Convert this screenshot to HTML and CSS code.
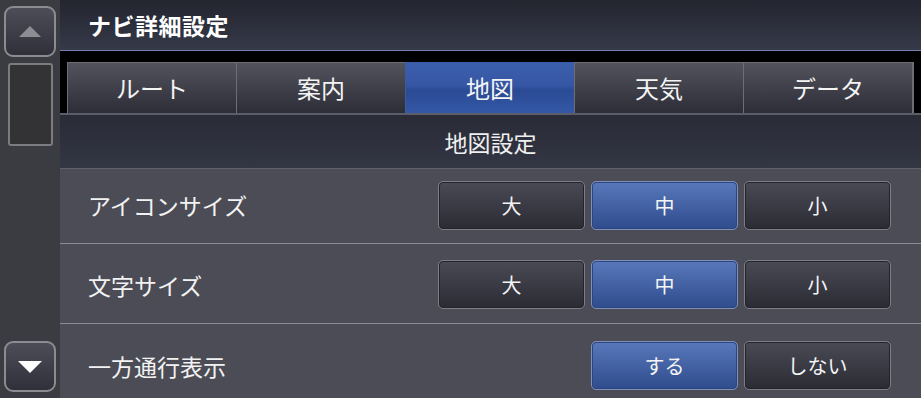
FILE: index.html
```html
<!DOCTYPE html>
<html lang="ja">
<head>
<meta charset="utf-8">
<link rel="stylesheet" href="styles.css">
</head>
<body>
<div class="app">
  <div class="sidebar">
    <div class="scroll-btn up"><span class="tri-up"></span></div>
    <div class="thumb"></div>
    <div class="spacer"></div>
    <div class="scroll-btn down"><span class="tri-down"></span></div>
  </div>
  <div class="main">
    <div class="header">ナビ詳細設定</div>
    <div class="tabbar">
      <div class="tab">ルート</div>
      <div class="tab">案内</div>
      <div class="tab active">地図</div>
      <div class="tab">天気</div>
      <div class="tab">データ</div>
    </div>
    <div class="section">地図設定</div>
    <div class="row r1">
      <div class="label">アイコンサイズ</div>
      <div class="opts">
        <div class="btn">大</div>
        <div class="btn on">中</div>
        <div class="btn">小</div>
      </div>
    </div>
    <div class="row r2">
      <div class="label">文字サイズ</div>
      <div class="opts">
        <div class="btn">大</div>
        <div class="btn on">中</div>
        <div class="btn">小</div>
      </div>
    </div>
    <div class="row r3">
      <div class="label">一方通行表示</div>
      <div class="opts">
        <div class="btn on">する</div>
        <div class="btn">しない</div>
      </div>
    </div>
  </div>
</div>
</body>
</html>
```
FILE: styles.css
```css
* { box-sizing: border-box; }
html, body { margin: 0; padding: 0; }
body {
  width: 921px;
  height: 398px;
  overflow: hidden;
  background: #4b4c56;
  font-family: "Noto Sans CJK JP", "Noto Sans", sans-serif;
  color: #f2f2f2;
}
.app { display: flex; width: 921px; height: 398px; }

.sidebar {
  width: 60px;
  flex: none;
  background: #3b3b42;
  display: flex;
  flex-direction: column;
  align-items: center;
  padding: 6px 0 6px 0;
}
.scroll-btn {
  width: 52px;
  height: 51px;
  border: 2px solid #8b8b92;
  border-radius: 9px;
  background: linear-gradient(#4c4d57, #2f3039);
  display: flex;
  align-items: center;
  justify-content: center;
  margin-left: -1px;
}
.tri-up {
  width: 0; height: 0;
  border-left: 11px solid transparent;
  border-right: 11px solid transparent;
  border-bottom: 11px solid #8d8d93;
}
.tri-down {
  width: 0; height: 0;
  border-left: 12px solid transparent;
  border-right: 12px solid transparent;
  border-top: 12px solid #ffffff;
}
.thumb {
  margin-top: 6px;
  width: 45px;
  height: 83px;
  background: #333336;
  border: 2px solid #7c7c80;
  border-radius: 3px;
}
.spacer { flex: 1; }

.main { flex: 1; display: flex; flex-direction: column; min-width: 0; }

.header {
  height: 50px;
  flex: none;
  padding-left: 28px;
  display: flex;
  align-items: center;
  font-size: 23px;
  font-weight: bold;
  letter-spacing: 0.5px;
  background: linear-gradient(#23252f, #363948);
  color: #ffffff;
}
.tabbar {
  flex: none;
  height: 63px;
  background: #000;
  border-top: 1px solid #7580aa;
  padding: 11px 7px 0 7px;
  display: flex;
}
.tab {
  flex: 1;
  height: 51px;
  border: 1px solid #6c6d75;
  border-bottom: none;
  border-right-width: 0;
  background: linear-gradient(#52535d, #2c2d37);
  display: flex;
  align-items: center;
  justify-content: center;
  font-size: 24px;
  color: #f4f4f4;
  padding-bottom: 2px;
}
.tab:last-child { border-right-width: 2px; }
.tab.active {
  background: linear-gradient(#3b5fac, #3656a4 45%, #2a4a94 55%, #3558a6);
  border-color: #3a5ca8;
}
.section {
  flex: none;
  height: 56px;
  border-top: 2px solid #5b5d68;
  border-bottom: 1px solid #5e606c;
  background: linear-gradient(#292b37, #333643);
  display: flex;
  align-items: center;
  justify-content: center;
  font-size: 23px;
  color: #f0f0f0;
}
.row {
  flex: none;
  display: flex;
  align-items: center;
  justify-content: space-between;
  padding: 0 30px 0 28px;
  background: #4b4c56;
  border-bottom: 1px solid #8b8c95;
}
.r1 { height: 75px; padding-bottom: 2px; }
.r2 { height: 80px; padding-top: 2px; }
.r3 { flex: 1; border-bottom: none; padding-top: 9px; }
.label { font-size: 23px; color: #f2f2f2; }
.opts { display: flex; gap: 6px; }
.btn {
  width: 147px;
  height: 49px;
  border: 1px solid #7d7e88;
  border-radius: 5px;
  background: linear-gradient(#494a54, #2a2b33);
  box-shadow: inset 0 0 0 1px #23242b;
  display: flex;
  align-items: center;
  justify-content: center;
  font-size: 20px;
  color: #f4f4f4;
}
.btn.on {
  background: linear-gradient(#5878bb, #2f4c8c);
  border-color: #8090b8;
  box-shadow: inset 0 0 0 1px #2b4580;
}
```
